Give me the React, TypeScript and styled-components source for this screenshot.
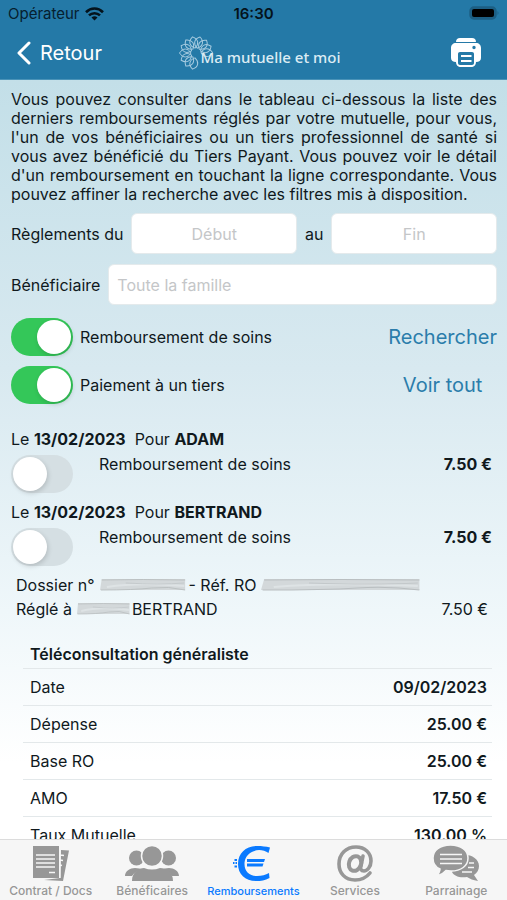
import React from "react";
import styled, { createGlobalStyle } from "styled-components";

const GlobalStyle = createGlobalStyle`
  * { box-sizing: border-box; }
  html, body { margin: 0; padding: 0; }
  body, input, button, table {
    font-family: Inter, "Liberation Sans", sans-serif;
    font-size: 16px;
    color: #10191d;
  }
`;

const Screen = styled.div`
  display: flex;
  flex-direction: column;
  height: 100vh;
  overflow: hidden;
`;

const Header = styled.header`
  flex: none;
  background: #2479a7;
  border-bottom: 1px solid #4a93b8;
`;

const StatusBar = styled.div`
  display: grid;
  grid-template-columns: 1fr auto 1fr;
  align-items: center;
  height: 27px;
  padding: 0 8px;
  font-size: 15px;
  color: #06202f;
`;

const Carrier = styled.span`
  display: flex;
  align-items: center;
  gap: 5px;
`;

const Clock = styled.time`
  font-weight: 600;
  color: #04131c;
`;

const Battery = styled.svg`
  justify-self: end;
`;

const NavBar = styled.div`
  display: grid;
  grid-template-columns: 1fr auto 1fr;
  align-items: center;
  height: 52px;
  padding: 0 26px 0 16px;
`;

const BackButton = styled.button`
  display: flex;
  align-items: center;
  gap: 9px;
  padding: 0;
  border: 0;
  background: none;
  color: #fff;
  font-size: 20px;
`;

const Brand = styled.div`
  display: flex;
  align-items: center;
  margin-left: 22px;
  color: #dcecf4;
  font-family: "Noto Sans", sans-serif;
  font-size: 15px;
  font-weight: 500;
  line-height: 20px;
`;

const BrandName = styled.span`
  margin-left: -12px;
  padding-top: 8px;
`;

const PrintButton = styled.button`
  justify-self: end;
  display: flex;
  padding: 0;
  border: 0;
  background: none;
`;

const Content = styled.main`
  flex: 1;
  min-height: 0;
  overflow: hidden;
  padding: 10px 10px 0 11px;
  background: linear-gradient(#c3dfe8, #d8e9f0 38%, #eff7fa 70%, #fff 90%);
`;

const Intro = styled.p`
  margin: 0;
  line-height: 19px;
  text-align: justify;
`;

const Filters = styled.form`
  display: flex;
  flex-direction: column;
  gap: 10px;
  margin-top: 9px;
`;

const FilterRow = styled.div`
  display: flex;
  align-items: center;
  gap: 8px;
`;

const Field = styled.input<{ $centered?: boolean }>`
  flex: 1;
  min-width: 0;
  height: 41px;
  padding: 0 8px;
  border: 1px solid #e4eaec;
  border-radius: 6px;
  background: #fff;
  text-align: ${(p) => (p.$centered ? "center" : "left")};
  &::placeholder { color: #c4c6c8; opacity: 1; }
`;

const Options = styled.div`
  display: grid;
  grid-template-columns: 1fr auto;
  row-gap: 10px;
  margin-top: 3px;
`;

const OptionLabel = styled.label`
  display: flex;
  align-items: center;
  gap: 7px;
`;

const Switch = styled.input`
  appearance: none;
  flex: none;
  display: flex;
  width: 62px;
  height: 38px;
  margin: 0;
  padding: 2px;
  border-radius: 19px;
  background: #d5dfe3;
  &::before {
    content: "";
    width: 34px;
    height: 34px;
    border-radius: 50%;
    background: #fff;
    box-shadow: 1px 2px 5px rgba(0, 0, 0, 0.16);
  }
  &:checked { background: #34c759; justify-content: flex-end; }
`;

const ActionButton = styled.button`
  padding: 0;
  border: 0;
  background: none;
  color: #2b7dab;
  font-size: 20px;
`;

const Payments = styled.ul`
  display: flex;
  flex-direction: column;
  gap: 10px;
  margin: 26px 0 0;
  padding: 0;
  list-style: none;
`;

const PaymentTitle = styled.div`
  height: 25px;
  line-height: 19px;
  white-space: pre;
`;

const PaymentLine = styled.label`
  display: flex;
  gap: 26px;
  padding-right: 5px;
  line-height: 18px;
`;

const PaymentLabel = styled.span`
  flex: 1;
`;

const FileInfo = styled.div`
  margin-top: 7px;
  padding: 0 9px 0 5px;
  line-height: 24px;
`;

const FileLine = styled.div`
  display: flex;
  align-items: center;
`;

const Amount = styled.span`
  margin-left: auto;
`;

const Smudge = styled.svg<{ $before?: number; $after?: number }>`
  flex: none;
  margin-left: ${(p) => p.$before ?? 0}px;
  margin-right: ${(p) => p.$after ?? 0}px;
`;

const Details = styled.table`
  width: calc(100% - 17px);
  margin: 19px 0 0 12px;
  border-collapse: collapse;
  caption, th { text-align: left; }
  caption { height: 28px; padding: 0 7px; line-height: 28px; font-weight: 600; }
  th, td { height: 37px; padding: 0 5px 0 7px; border-top: 1px solid #e3e8ea; }
  th { font-weight: 400; }
  td { text-align: right; font-weight: 600; }
`;

const TabBar = styled.nav`
  flex: none;
  display: grid;
  grid-template-columns: repeat(5, 1fr);
  height: 61px;
  padding-top: 5px;
  border-top: 1px solid #dcdcdc;
  background: #f6f6f6;
`;

const Tab = styled.a<{ $active?: boolean }>`
  display: flex;
  flex-direction: column;
  align-items: center;
  gap: 1px;
  color: ${(p) => (p.$active ? "#0a7aff" : "#979797")};
  font-size: ${(p) => (p.$active ? 11 : 12)}px;
  font-weight: 500;
  line-height: 16px;
  text-decoration: none;
  white-space: nowrap;
`;

const Flower = () => (
  <svg width="34" height="34" viewBox="0 0 34 34" fill="none" stroke="#a6cbe0" strokeWidth="1" aria-hidden="true">
    {[-168, -142, -116, -90, -64, -38, -12, 14, 40, 66, 88].map((a) => (
      <path key={a} transform={`rotate(${a} 17 17)`} d="M17 12C12 9 11.500 4 17 0.500C22.500 4 22 9 17 12Z" />
    ))}
  </svg>
);

const PrinterIcon = () => (
  <svg width="30" height="30" viewBox="0 0 30 30" fill="#fff" aria-hidden="true">
    <path d="M5 4C5 1.500 6.500 0 9 0H21C23.500 0 25 1.500 25 4Z" />
    <path fillRule="evenodd" d="M5 5H25C28 5 30 7 30 10V20C30 22.500 28 24 25 24C25 27 23 29 20 29H10C7 29 5 27 5 24C2 24 0 22.500 0 20V10C0 7 2 5 5 5ZM9 14C7.800 14 7 14.800 7 16V25C7 26.300 7.800 27 9 27H21C22.200 27 23 26.300 23 25V16C23 14.800 22.200 14 21 14ZM23 7.800A1.700 1.700 0 1 0 23 11.200A1.700 1.700 0 1 0 23 7.800Z" />
    <path d="M10 17H20.500V19H10ZM10 22H20.500V24H10Z" />
  </svg>
);

const DocsIcon = () => (
  <svg width="38" height="37" viewBox="0 0 38 37" aria-hidden="true">
    <path fill="currentColor" d="M29 5L37 5.500L31 36L12 35L28 33Z" />
    <path fill="currentColor" d="M1 1H27V33H1Z" />
    <path fill="none" stroke="#f6f6f6" strokeWidth="1.500" d="M4 10H23M4 14H23M4 18H23M4 22H23M17 27.500H23M28 10L32 10.500M28 15L31 15.500M28 20L30 20.500M28 1V33" />
  </svg>
);

const FamilyIcon = () => (
  <svg width="56" height="37" viewBox="0 0 56 37" fill="currentColor" aria-hidden="true">
    <circle cx="12.500" cy="13" r="7.500" />
    <circle cx="44.500" cy="13" r="7.500" />
    <path d="M1 31C1 26 6 23 11 23C14 23 17 24 18 24.500C14 25 10 28 8 31ZM55 31C55 26 50 23 45 23C42 23 39 24 38 24.500C42 25 46 28 48 31Z" />
    <circle cx="28" cy="11" r="10.500" stroke="#f6f6f6" strokeWidth="1.500" />
    <path d="M8 36C8 27 15 23 20 23Q28 26 36 23C42 23 49 27 49 36Z" />
  </svg>
);

const EuroIcon = () => (
  <svg width="42" height="37" viewBox="0 0 42 37" fill="currentColor" aria-hidden="true">
    <path d="M38 2.500L36.500 8C32 5 26 4 21 6.500C15 9 12.500 14 12.500 19C12.500 27 18 31 25 31C30 31 33.500 30 37 28L37.500 33C33 35.500 29 36 24 36C13 36 6 29 6 19C6 8 14 1 25 1C30 1 34 1.500 38 2.500Z" />
    <path d="M15 14H33L32 17H15ZM15 18.500H31.500L30.500 21.500H15ZM2.500 14H5V16H2.500ZM1 17H2.500V19H1ZM3.500 17H5V19H3.500ZM2.500 20.500H5V22.500H2.500Z" />
  </svg>
);

const AtIcon = () => (
  <svg width="38" height="37" viewBox="0 0 38 37" fill="none" stroke="currentColor" strokeWidth="3.600" strokeLinecap="round" aria-hidden="true">
    <path d="M34 28C30 33 25 35 19 35C9 35 3 28 3 19C3 9 10 2 20 2C29 2 35 8 35 16C35 22 31 26 28 26C25 26 24 24 25 21L27 11" />
    <ellipse cx="19" cy="18.500" rx="6" ry="7.500" transform="rotate(20 19 18.500)" strokeWidth="4" />
  </svg>
);

const ChatIcon = () => (
  <svg width="48" height="37" viewBox="0 0 48 37" fill="currentColor" aria-hidden="true">
    <path d="M30 10C39 9 47 14 47 21C47 25 45 28 42 30L46 36C41 35 38 34 35 32C27 33 22 31 20 27Z" />
    <path stroke="#f6f6f6" strokeWidth="1.500" d="M18.500 0C29 0 36 5.500 36 13C36 21 29 26 19 26C17 26 16 26 14 25.500C12 28 9 30 5 31C7 28 8 26 8 24C3 22 1 18 1 13C1 5.500 8 0 18.500 0Z" />
    <path fill="none" stroke="#f6f6f6" strokeWidth="1.700" d="M8 9.500H30M8 14H30M8 18.500H30M37 18H42M36 22.500H42M30 27H40" />
  </svg>
);

const Redaction = ({ width, before, after }: { width: number; before?: number; after?: number }) => (
  <Smudge $before={before} $after={after} width={width} height="14" viewBox="0 0 100 14" preserveAspectRatio="none" aria-hidden="true">
    <path d="M2 1L99 1L99 12L0 12Z" fill="#d3d8da" />
    <path d="M2 2Q50 1 99 2M1 12Q40 12 60 10T99 12" fill="none" stroke="#b9bec0" strokeWidth="1" />
    <path d="M8 9Q45 4 98 8" fill="none" stroke="#dee3e5" strokeWidth="2" />
    <path d="M30 5Q70 7 98 5" fill="none" stroke="#c3c8ca" strokeWidth="1" />
  </Smudge>
);

const payments = [
  { date: "13/02/2023", name: "ADAM", amount: "7.50 €" },
  { date: "13/02/2023", name: "BERTRAND", amount: "7.50 €" },
];

const details = [
  ["Date", "09/02/2023"],
  ["Dépense", "25.00 €"],
  ["Base RO", "25.00 €"],
  ["AMO", "17.50 €"],
  ["Taux Mutuelle", "130.00 %"],
];

const tabs = [
  { label: "Contrat / Docs", icon: <DocsIcon /> },
  { label: "Bénéficaires", icon: <FamilyIcon /> },
  { label: "Remboursements", icon: <EuroIcon />, active: true },
  { label: "Services", icon: <AtIcon /> },
  { label: "Parrainage", icon: <ChatIcon /> },
];

export default function App() {
  return (
    <Screen>
      <GlobalStyle />
      <Header>
        <StatusBar>
          <Carrier>
            Opérateur
            <svg width="19" height="14" viewBox="0 0 19 14" fill="none" stroke="#04131c" strokeWidth="2.600" aria-hidden="true">
              <path d="M1 5.200C6 0.300 13 0.300 18 5.200M4 8.400C7 5.500 12 5.500 15 8.400" />
              <path d="M9.500 13.500L6.500 10.500Q9.500 8 12.500 10.500Z" fill="#04131c" stroke="none" />
            </svg>
          </Carrier>
          <Clock>16:30</Clock>
          <Battery width="31" height="15" viewBox="0 0 31 15" aria-hidden="true">
            <rect x="2" y="1" width="26" height="12" rx="4" fill="#1c5f84" stroke="#1c5f84" strokeWidth="1.500" />
            <rect x="4" y="3" width="22" height="8" rx="2" fill="#000" />
            <path d="M29.500 5Q31.500 7 29.500 9Z" fill="#1c5f84" />
          </Battery>
        </StatusBar>
        <NavBar>
          <BackButton type="button">
            <svg width="15" height="24" viewBox="0 0 15 24" fill="none" stroke="#fff" strokeWidth="3" strokeLinecap="round" strokeLinejoin="round" aria-hidden="true">
              <path d="M13 2L3 12L13 22" />
            </svg>
            Retour
          </BackButton>
          <Brand>
            <Flower />
            <BrandName>Ma mutuelle et moi</BrandName>
          </Brand>
          <PrintButton type="button" aria-label="Imprimer">
            <PrinterIcon />
          </PrintButton>
        </NavBar>
      </Header>

      <Content>
        <Intro>
          Vous pouvez consulter dans le tableau ci-dessous la liste des derniers remboursements réglés par votre
          mutuelle, pour vous, l'un de vos bénéficiaires ou un tiers professionnel de santé si vous avez bénéficié du
          Tiers Payant. Vous pouvez voir le détail d'un remboursement en touchant la ligne correspondante. Vous pouvez
          affiner la recherche avec les filtres mis à disposition.
        </Intro>

        <Filters>
          <FilterRow>
            <label htmlFor="start">Règlements du</label>
            <Field id="start" placeholder="Début" $centered />
            <label htmlFor="end">au</label>
            <Field id="end" placeholder="Fin" $centered />
          </FilterRow>
          <FilterRow>
            <label htmlFor="member">Bénéficiaire</label>
            <Field id="member" placeholder="Toute la famille" />
          </FilterRow>
          <Options>
            <OptionLabel>
              <Switch type="checkbox" role="switch" defaultChecked />
              Remboursement de soins
            </OptionLabel>
            <ActionButton type="button">Rechercher</ActionButton>
            <OptionLabel>
              <Switch type="checkbox" role="switch" defaultChecked />
              Paiement à un tiers
            </OptionLabel>
            <ActionButton type="button">Voir tout</ActionButton>
          </Options>
        </Filters>

        <Payments>
          {payments.map((p) => (
            <li key={p.name}>
              <PaymentTitle>
                Le <b>{p.date}</b>{"  "}Pour <b>{p.name}</b>
              </PaymentTitle>
              <PaymentLine>
                <Switch type="checkbox" role="switch" />
                <PaymentLabel>Remboursement de soins</PaymentLabel>
                <b>{p.amount}</b>
              </PaymentLine>
            </li>
          ))}
        </Payments>

        <FileInfo>
          <FileLine>
            Dossier n°
            <Redaction width={86} before={5} after={3} />- Réf. RO
            <Redaction width={160} before={5} />
          </FileLine>
          <FileLine>
            Réglé à
            <Redaction width={53} before={5} after={2} />
            BERTRAND
            <Amount>7.50 €</Amount>
          </FileLine>
        </FileInfo>

        <Details>
          <caption>Téléconsultation généraliste</caption>
          <tbody>
            {details.map(([label, value]) => (
              <tr key={label}>
                <th scope="row">{label}</th>
                <td>{value}</td>
              </tr>
            ))}
          </tbody>
        </Details>
      </Content>

      <TabBar>
        {tabs.map((t) => (
          <Tab key={t.label} href="#" $active={t.active} aria-current={t.active ? "page" : undefined}>
            {t.icon}
            {t.label}
          </Tab>
        ))}
      </TabBar>
    </Screen>
  );
}
